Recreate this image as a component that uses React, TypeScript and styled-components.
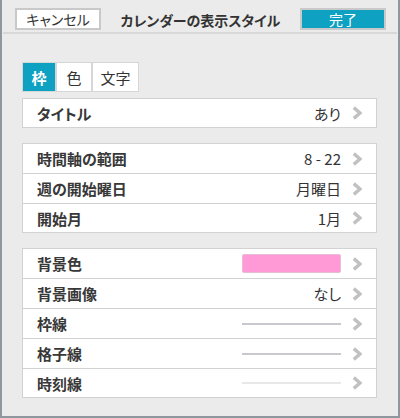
import React from 'react'
import styled, { createGlobalStyle } from 'styled-components'

const GlobalStyle = createGlobalStyle`
  html, body {
    margin: 0;
    padding: 0;
    background: #ebebeb;
  }
  body {
    font-family: 'Noto Sans CJK JP', 'Noto Sans', sans-serif;
    font-feature-settings: 'palt';
    color: #333;
  }
`

const Frame = styled.div`
  width: 400px;
  height: 418px;
  box-sizing: border-box;
  border: 2px solid #8e969e;
  border-top: none;
  background: #ebebeb;
  display: flex;
  flex-direction: column;
`

const Header = styled.div`
  height: 32px;
  margin: 0 1px;
  border-bottom: 2px solid #d8d8d8;
  display: flex;
  align-items: center;
  justify-content: space-between;
  padding: 0 11px 0 12px;
`

const HeaderButton = styled.button<{ primary?: boolean }>`
  width: 86px;
  height: 22px;
  margin-top: 6px;
  box-sizing: border-box;
  border: 2px solid #c9c9c9;
  background: ${p => (p.primary ? '#0ea1c1' : '#fff')};
  color: ${p => (p.primary ? '#fff' : '#333')};
  font-family: inherit;
  font-feature-settings: 'palt';
  font-size: 14px;
  line-height: 18px;
  padding: 0;
`

const Title = styled.div`
  font-size: 14px;
  font-weight: 700;
  margin-top: 7px;
  color: #333;
`

const Body = styled.div`
  padding: 28px 21px 0 20px;
  display: flex;
  flex-direction: column;
`

const Tabs = styled.div`
  display: flex;
  align-self: flex-start;
  gap: 2px;
  padding: 1px;
  background: #d6d6d6;
  margin-bottom: 6px;
`

const Tab = styled.div<{ active?: boolean; w: number }>`
  width: ${p => p.w}px;
  height: 28px;
  display: flex;
  align-items: center;
  justify-content: center;
  font-size: 15px;
  font-weight: ${p => (p.active ? 700 : 400)};
  background: ${p => (p.active ? '#0ea1c1' : '#fff')};
  color: ${p => (p.active ? '#fff' : '#333')};
`

const Group = styled.div`
  background: #fff;
  border: 1px solid #d2d2d2;
  margin-bottom: 15px;
`

const Row = styled.div`
  height: 29px;
  display: flex;
  align-items: center;
  padding: 0 14px;
  & + & {
    border-top: 1px solid #d2d2d2;
  }
  &:last-child {
    height: 28px;
  }
`

const Label = styled.div`
  flex: 1;
  font-size: 15px;
  font-weight: 700;
  color: #383838;
`

const Value = styled.div`
  font-size: 15px;
  color: #333;
`

const Swatch = styled.div<{ color: string }>`
  width: 99px;
  height: 19px;
  box-sizing: border-box;
  border: 1px solid #e6bcd6;
  border-radius: 2px;
  background: ${p => p.color};
`

const LineSample = styled.div<{ color: string }>`
  width: 99px;
  height: 2px;
  background: ${p => p.color};
`

const ChevronBox = styled.div`
  width: 10px;
  margin-left: 11px;
  display: flex;
  align-items: center;
`

const Chevron = () => (
  <ChevronBox>
    <svg width="10" height="14" viewBox="0 0 10 14">
      <polyline points="1.8,1.6 8,7 1.8,12.4" fill="none" stroke="#c1c1c1" strokeWidth="3.4" />
    </svg>
  </ChevronBox>
)

type Item = { label: string; value?: string; swatch?: string; line?: string }

const groups: Item[][] = [
  [{ label: 'タイトル', value: 'あり' }],
  [
    { label: '時間軸の範囲', value: '8 - 22' },
    { label: '週の開始曜日', value: '月曜日' },
    { label: '開始月', value: '1月' },
  ],
  [
    { label: '背景色', swatch: '#ff9ad6' },
    { label: '背景画像', value: 'なし' },
    { label: '枠線', line: '#c9c9cd' },
    { label: '格子線', line: '#c9c9cd' },
    { label: '時刻線', line: '#e8e8e8' },
  ],
]

const App = () => {
  return (
    <>
      <GlobalStyle />
      <Frame>
        <Header>
          <HeaderButton>キャンセル</HeaderButton>
          <Title>カレンダーの表示スタイル</Title>
          <HeaderButton primary>完了</HeaderButton>
        </Header>
        <Body>
          <Tabs>
            <Tab active w={32}>枠</Tab>
            <Tab w={34}>色</Tab>
            <Tab w={45}>文字</Tab>
          </Tabs>
          {groups.map((items, i) => (
            <Group key={i}>
              {items.map(item => (
                <Row key={item.label}>
                  <Label>{item.label}</Label>
                  {item.value && <Value>{item.value}</Value>}
                  {item.swatch && <Swatch color={item.swatch} />}
                  {item.line && <LineSample color={item.line} />}
                  <Chevron />
                </Row>
              ))}
            </Group>
          ))}
        </Body>
      </Frame>
    </>
  )
}

export default App
